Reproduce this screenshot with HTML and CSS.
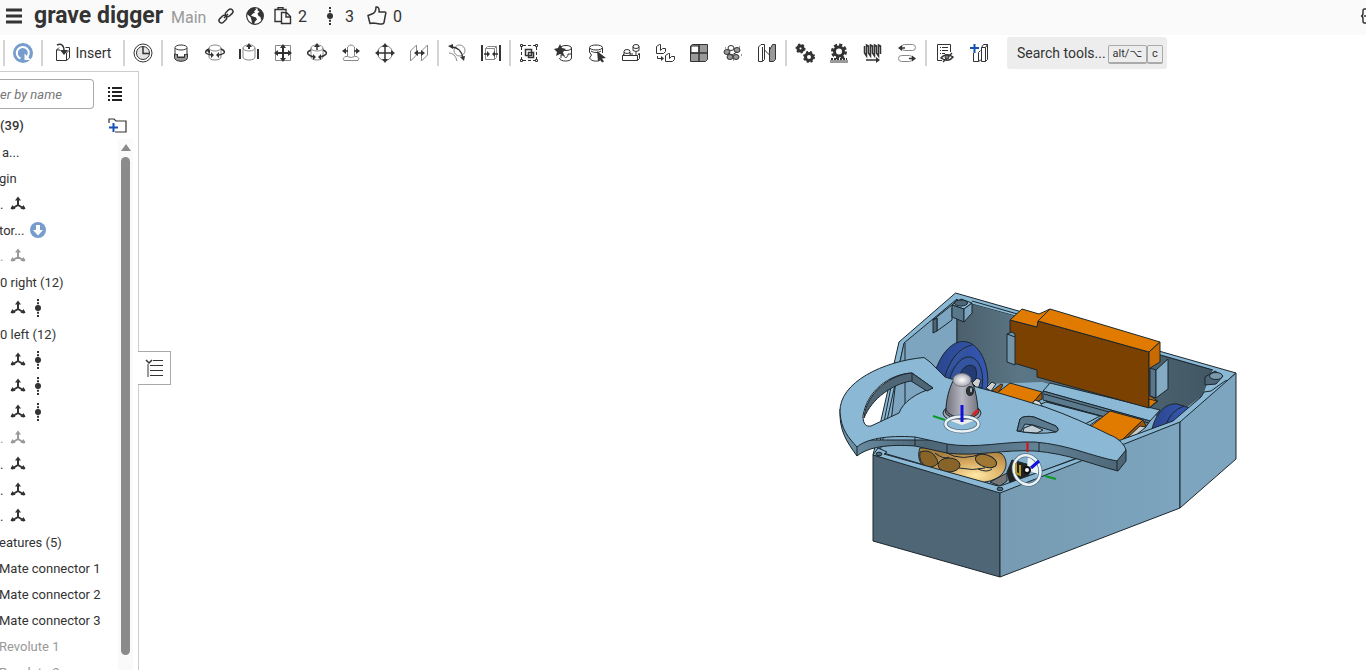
FILE: index.html
```html
<!DOCTYPE html>
<html lang="en">
<head>
<meta charset="utf-8">
<title>grave digger</title>
<link rel="stylesheet" href="styles.css">
</head>
<body>
<svg class="defs" aria-hidden="true">
  <symbol id="cyl" viewBox="0 0 20 20"><ellipse cx="10" cy="5" rx="6" ry="3"/><path d="M4 5v9c0 4 12 4 12 0V5"/></symbol>
  <symbol id="triad" viewBox="0 0 16 16"><path d="M8 9V4M8 9L3 12M8 9l5 3" fill="none" stroke="currentColor" stroke-width="2"/><path d="M8 .5l3 4H5zM.5 13l2-4 3 4zM15.500 13l-2-4-3 4z" fill="currentColor"/><circle cx="2.500" cy="12" r="1.500" fill="currentColor"/><circle cx="13.500" cy="12" r="1.500" fill="currentColor"/></symbol>
  <symbol id="dof" viewBox="0 0 16 18"><path d="M8 0v18" stroke="currentColor" stroke-width="2" stroke-dasharray="2 1.200"/><circle cx="8" cy="9" r="3" fill="currentColor"/></symbol>
</svg>

<header class="header">
  <button class="plain menu" aria-label="Menu"><svg width="16" height="16"><path d="M0 2h16M0 8h16M0 14h16" stroke="#333" stroke-width="3"/></svg></button>
  <h1 class="title">grave digger</h1>
  <span class="branch">Main</span>
  <button class="plain link" aria-label="Share link"><svg width="16" height="16" fill="none" stroke="#333" stroke-width="1.500"><rect x="7" y="2.500" width="8.500" height="5" rx="2.500" transform="rotate(-45 11 5)"/><rect x=".5" y="8.500" width="8.500" height="5" rx="2.500" transform="rotate(-45 5 11)"/><path d="M6 10l4-4"/></svg></button>
  <button class="plain globe" aria-label="Public"><svg width="20" height="20"><circle cx="10" cy="10" r="8.300" fill="#fff" stroke="#333" stroke-width="1.200"/><path d="M3 5l3-3 4-.5 1 2-2 2 1 1-2 1-2 2 2 1 3 1 1 2-2 2-1 3-2-1-.5-3.500L5.500 11 2 8zM13 2.500l3 1.500 2.500 4-.5 5-2 1-.5-3-2-1-1-2.500 2-2-2-1z" fill="#333"/></svg></button>
  <button class="plain stat copies"><svg width="18" height="18" fill="none" stroke="#333" stroke-width="1.400"><path d="M7 14.500H1v-12h11v2M4 2.500v-2h5v2M7.500 5.500h5l4 4v7h-9zM12 5.500v4.500h4.500"/></svg><span>2</span></button>
  <button class="plain stat mates"><svg width="16" height="18"><use href="#dof"/></svg><span>3</span></button>
  <button class="plain stat likes"><svg width="20" height="20" fill="none" stroke="#333" stroke-width="1.500" stroke-linejoin="round"><path d="M1 9.500l4-1.500c3-1 4-3 4-7 2-.5 3.500 1 3 5h6c1 0 1 1.500.5 2.500l-1.500 8c-.3 1.500-1 1.500-2 1.500-4 0-6-1-9-1l-3 .5z"/></svg><span>0</span></button>
  <button class="plain edge" aria-label="Developer"><svg width="6" height="18" fill="none" stroke="#333" stroke-width="1.500"><path d="M6 2H4q-1 0-1 2v2q0 3-2 3 2 0 2 3v2q0 2 1 2h2M4 9h2"/></svg></button>
</header>

<nav class="toolbar" aria-label="Tools">
  <i class="sep"></i>
  <button class="tool" aria-label="Update"><svg width="20" height="20"><circle cx="10" cy="10" r="10" fill="#769dcd"/><path d="M7.500 15.500A6 6 0 1 1 13 15" fill="none" stroke="#fff" stroke-width="2"/><path d="M11.500 10.500v6.500H18z" fill="#fff"/></svg></button>
  <i class="sep"></i>
  <button class="tool insert"><svg class="ic" width="16" height="20"><path d="M4 4.500L1.500 7v10.500h10L14.500 15V4.500h-4M1.500 7H5M11.500 17.500V10l3-3"/><path class="b" d="M2 2c4-2 7 0 7 6"/><path class="k" d="M5 7h8l-4 5z"/></svg><span>Insert</span></button>
  <i class="sep"></i>
  <button class="tool" aria-label="Rollback"><svg class="ic" width="20" height="20"><circle cx="10" cy="10" r="9"/><circle cx="10" cy="10" r="6.500" fill="#e5e5e5"/><path class="b" d="M10 4v6.500h6"/></svg></button>
  <i class="sep"></i>
  <button class="tool" aria-label="Fastened mate"><svg class="ic" width="20" height="20"><path d="M3.500 11v3.500c0 5 13 5 13 0V11l-3 1v2h-7v-2z" fill="#999"/><ellipse class="w" cx="10" cy="4.500" rx="6" ry="2.500"/><path d="M4 5v6M16 5v6M6.500 11v3.500h7V11"/></svg></button>
  <button class="tool" aria-label="Revolute mate"><svg class="ic" width="20" height="20"><use class="g" href="#cyl"/><path class="b" d="M4 6C-1 8-1 11 7 12M16 6c5 2 5 5-3 6"/><path class="k" d="M6 9v6l3-3zM14 9v6l-3-3zM1 7h4v4z"/></svg></button>
  <button class="tool" aria-label="Slider mate"><svg class="ic" width="20" height="20"><use class="g" href="#cyl"/><path class="t" d="M1 6v10M19 6v10M10 6V2"/><path class="k" d="M7 4h6l-3-4z"/></svg></button>
  <button class="tool" aria-label="Planar mate"><svg class="ic" width="20" height="20"><path class="g" d="M2.500 2.500h15v15h-15z"/><path class="t" d="M10 4v12M4 10h12"/><path class="k" d="M7 5h6l-3-4zM7 15h6l-3 4zM5 7v6l-4-3zM15 7v6l4-3z"/></svg></button>
  <button class="tool" aria-label="Cylindrical mate"><svg class="ic" width="20" height="20"><use class="g" href="#cyl"/><path class="b" d="M4 7c-5 2-5 5 3 7M16 7c5 2 5 5-3 7M10 7V3"/><path class="k" d="M7 4h6l-3-4zM6 11v6l3-3zM14 11v6l-3-3z"/></svg></button>
  <button class="tool" aria-label="Pin slot mate"><svg class="ic" width="20" height="20"><path class="g" d="M6.500 4q3.500-4 7 0v9.500q-3 2-7 0zM6 13.500H4q-3 2-1 4h14q2-2-1-4h-2"/><path class="b" d="M3 8h4M13 8h4"/><path class="k" d="M5 5v6L1 8zM15 5v6l4-3z"/></svg></button>
  <button class="tool" aria-label="Ball mate"><svg class="ic" width="20" height="20"><circle class="g" cx="10" cy="10" r="7.500"/><path class="b" d="M10 3v14M3 10h14"/><path class="k" d="M7 4h6l-3-4zM7 16h6l-3 4zM4 7v6l-4-3zM16 7v6l4-3z"/></svg></button>
  <button class="tool" aria-label="Parallel mate"><svg class="ic" width="20" height="20"><path class="g" d="M1.500 8L7.500 2v10l-6 6zM12.500 8l6-6v10l-6 6z"/><path class="b" d="M7 10h7"/><path class="k" d="M9 7v6l-4-3zM12 7v6l4-3z"/></svg></button>
  <i class="sep"></i>
  <button class="tool" aria-label="Tangent mate"><svg class="ic" width="20" height="20"><circle class="g" cx="12.500" cy="7.500" r="5.500"/><path class="g" d="M2 10q6 0 8 8"/><path class="b" d="M4 4c7 0 11 5 12 11"/><path class="k" d="M1 3l5-2v5zM13 14l5-1-1 5z"/></svg></button>
  <button class="tool" aria-label="Width mate"><svg class="ic" width="22" height="20"><path class="g" d="M5.500 5.500h9v11h-9zM5.500 5.500l2-2h9v11l-2 2M14.500 5.500l2-2"/><path class="t" d="M2 2v16M20 2v16"/><path class="b" d="M4 11h5M13 11h5"/><path class="k" d="M7 8v6l3-3zM15 8v6l-3-3z"/></svg></button>
  <i class="sep"></i>
  <button class="tool" aria-label="Group"><svg class="ic" width="20" height="20"><path d="M4 2.500h12M4 17.500h12M2.500 4v12M17.500 4v12" stroke-dasharray="3 2"/><path class="b" d="M6.500 6.500h6v6h-6zM9.500 9.500h5v5h-5z"/><path class="w" d="M1.500 1.500h2v2h-2zM16.500 1.500h2v2h-2zM1.500 16.500h2v2h-2zM16.500 16.500h2v2h-2z"/></svg></button>
  <button class="tool" aria-label="Mate connector"><svg class="ic" width="20" height="20"><ellipse cx="13" cy="5" rx="5.500" ry="2.500"/><path d="M18.500 5v10c0 4-12 4-12 0M8 15v-3h3c0 4 4 3 4-1h3"/><path class="k" d="M7 1l2 4 4 1-3 3 1 4-4-2-4 2 1-4-3-3 4-1z"/></svg></button>
  <button class="tool" aria-label="Select"><svg class="ic" width="20" height="20"><ellipse cx="9" cy="4.500" rx="6.500" ry="2.500"/><path d="M2.500 5v4l2 3-2 3c2 4 10 4 12 1M15.500 5v5M4 8c3 2 7 2 10 0"/><path class="k" d="M10 8l9 7-4 .5 2 3-2 1-2-3-2 2z"/></svg></button>
  <button class="tool" aria-label="Replicate"><svg class="ic" width="20" height="20"><ellipse cx="15" cy="3.500" rx="3" ry="2"/><path d="M12 3.500v4q3 2 6 0v-4M3 9v4M9 9v4M15 9v4"/><ellipse cx="6" cy="8.500" rx="3" ry="2"/><path d="M1.500 12.500h15v5h-15zM1.500 12.500L3 11M16.500 12.500l2-2v5l-2 2M9 11h3M17 11h1"/></svg></button>
  <button class="tool" aria-label="Linear pattern"><svg class="ic" width="20" height="20"><path class="w" d="M1.500 3.500l3-2h1v6l2-2h3v3l-2 2h-7zM10.500 12.500l3-2h1v5l2-2h3v3l-2 2h-7z"/><path d="M2.500 13v2.500H6"/><path class="k" d="M6 13v5l3-2.500z"/></svg></button>
  <button class="tool" aria-label="Pattern"><svg class="ic" width="20" height="20"><path d="M1.500 3l2-1.500h15v15l-2 2h-15z" fill="#999"/><path class="w" d="M2 3h8v7H2z"/><path class="b" d="M10 2v16M2 10h16"/></svg></button>
  <button class="tool" aria-label="Circular pattern"><svg class="ic" width="20" height="20"><g fill="#999"><ellipse cx="4" cy="9" rx="3" ry="2.500"/><ellipse cx="14" cy="7" rx="3" ry="2.500"/><ellipse cx="7" cy="14" rx="3" ry="2.500"/><ellipse cx="13" cy="14" rx="3" ry="2.500"/></g><ellipse class="w" cx="8" cy="5" rx="3" ry="2.500"/><path d="M5 10l4 2 5-3M2 5h1M18 12h1M10 17h1M16 4h1"/></svg></button>
  <button class="tool" aria-label="Mirror"><svg class="ic" width="20" height="20"><path class="w" d="M1.500 4L4 1.500h3.500v15l-2 2h-4zM5.500 4v14"/><path d="M12.500 7l3-5.500h3v15l-2 2h-4z" fill="#999"/><path d="M7.500 2v5l5 5V4"/></svg></button>
  <i class="sep"></i>
  <button class="tool" aria-label="Gear relation"><svg class="gear" width="20" height="20"><circle cx="5.500" cy="5.500" r="2.500"/><circle class="teeth" cx="5.500" cy="5.500" r="4"/><circle cx="14" cy="14" r="3.500"/><circle class="teeth" cx="14" cy="14" r="5"/></svg></button>
  <button class="tool" aria-label="Rack and pinion"><svg class="gear" width="20" height="20"><circle cx="10" cy="8.500" r="4.500"/><circle class="teeth big" cx="10" cy="8.500" r="6.500"/><path d="M2 16h16" stroke-dasharray="2 1" stroke-width="2"/><path d="M1 18.500h18" stroke="#999"/></svg></button>
  <button class="tool" aria-label="Screw relation"><svg class="ic" width="20" height="20"><path class="b" d="M1.500 3v7l2 3V2l2 1v7l2 3V2l2 1v7l2 3V2l2 1v7l2 3V2l2 1v8M3 17h11"/><path class="k" d="M13 14v6l4-3z"/></svg></button>
  <button class="tool" aria-label="Linear relation"><svg class="ic" width="20" height="20"><rect class="g" x="4.500" y="1.500" width="14" height="6" rx="3"/><rect class="g" x="1.500" y="12.500" width="14" height="6" rx="3"/><path class="b" d="M3 5h5M12 15.500h5"/><path class="k" d="M5 2v6L1 5zM15 12.500v6l4-3z"/></svg></button>
  <i class="sep"></i>
  <button class="tool" aria-label="Bill of materials"><svg class="ic" width="20" height="20"><path d="M7 17.500H2.500v-16h13V9M5 4.500h1M7 4.500h6M5 7.500h1M7 7.500h6M5 10.500h1M7 10.500h3"/><path d="M6 15q5-6 12-1-5 6-12 1zM8 19l9-9" stroke-width="1.500"/><circle cx="12" cy="14" r="2" fill="#777"/></svg></button>
  <button class="tool" aria-label="Create part"><svg class="ic" width="20" height="20"><path d="M4.500 10v8.500h5V9.500l2-2M9.500 18.500l3-2M12.500 18.500V4.500l2-3h4v15l-2 2zM12.500 4.500h4v14M16.500 4.500l2-3"/><path d="M1 5h9M5.500 1v9" stroke="#1651b0" stroke-width="2"/></svg></button>
  <button class="search"><span>Search tools...</span><kbd>alt/⌥</kbd><kbd>c</kbd></button>
</nav>

<main class="main">
  <aside class="sidebar">
    <div class="filter">
      <input type="text" placeholder="er by name" aria-label="Filter by name">
      <button class="plain" aria-label="List view"><svg width="14" height="14"><path d="M0 1h2M4 1h10M0 5h2M4 5h10M0 9h2M4 9h10M0 13h2M4 13h10" stroke="#222" stroke-width="2"/></svg></button>
    </div>
    <div class="heading"><strong>(39)</strong><button class="plain" aria-label="Add folder"><svg width="19" height="15"><path d="M1 5V1h5l2 2h10v11H7" fill="none" stroke="#333" stroke-width="1.200"/><path d="M1 9.500h9M5.500 5v9" stroke="#1651b0" stroke-width="2"/></svg></button></div>
    <div class="list">
      <ul class="tree">
        <li class="in">a...</li>
        <li class="edgecut">gin</li>
        <li><span class="dot">.</span><svg class="i16"><use href="#triad"/></svg></li>
        <li class="edgecut">tor...<svg class="i16 down" viewBox="0 0 16 16"><circle cx="8" cy="8" r="8" fill="#769dcd"/><path d="M6 3h4v5h3l-5 5.500L3 8h3z" fill="#fff"/></svg></li>
        <li class="off"><span class="dot">.</span><svg class="i16"><use href="#triad"/></svg></li>
        <li>0 right (12)</li>
        <li><span class="dot"></span><svg class="i16"><use href="#triad"/></svg><svg class="i18"><use href="#dof"/></svg></li>
        <li>0 left (12)</li>
        <li><span class="dot"></span><svg class="i16"><use href="#triad"/></svg><svg class="i18"><use href="#dof"/></svg></li>
        <li><span class="dot"></span><svg class="i16"><use href="#triad"/></svg><svg class="i18"><use href="#dof"/></svg></li>
        <li><span class="dot"></span><svg class="i16"><use href="#triad"/></svg><svg class="i18"><use href="#dof"/></svg></li>
        <li class="off"><span class="dot">.</span><svg class="i16"><use href="#triad"/></svg></li>
        <li><span class="dot">.</span><svg class="i16"><use href="#triad"/></svg></li>
        <li><span class="dot">.</span><svg class="i16"><use href="#triad"/></svg></li>
        <li><span class="dot">.</span><svg class="i16"><use href="#triad"/></svg></li>
        <li class="edgecut">eatures (5)</li>
        <li class="edgecut">Mate connector 1</li>
        <li class="edgecut">Mate connector 2</li>
        <li class="edgecut">Mate connector 3</li>
        <li class="off edgecut">Revolute 1</li>
        <li class="off edgecut">Revolute 2</li>
      </ul>
      <div class="scroll"><i class="up"></i><i class="thumb"></i></div>
    </div>
  </aside>
  <section class="canvas">
    <button class="flyout" aria-label="Expand panel"><svg width="20" height="20" fill="none" stroke="#333"><path d="M2 2l3 3 3-3" stroke-width="1.500"/><path d="M9 2.500h10M6 7.500h13M6 12.500h13M6 17.500h13"/><path d="M4 6v13" stroke="#999" stroke-width="2"/></svg></button>
    <svg class="model" width="420" height="310" viewBox="830 280 420 310" role="img" aria-label="Robot assembly">
      <defs>
        <linearGradient id="wall" x1="0" x2="1"><stop offset="0" stop-color="#4b5f6b"/><stop offset=".25" stop-color="#5b7686"/><stop offset="1" stop-color="#425763"/></linearGradient>
        <linearGradient id="side" x1="0" x2="1"><stop offset="0" stop-color="#769bb2"/><stop offset="1" stop-color="#7da5bf"/></linearGradient>
        <linearGradient id="cone" x1="0" x2="1"><stop offset="0" stop-color="#70707a"/><stop offset=".5" stop-color="#b8b8c4"/><stop offset="1" stop-color="#74747f"/></linearGradient>
        <radialGradient id="cap"><stop offset="0" stop-color="#fff"/><stop offset="1" stop-color="#a8a8b5"/></radialGradient>
        <radialGradient id="gold" cx=".65" cy=".8" r=".7"><stop offset="0" stop-color="#ffe9a6"/><stop offset=".5" stop-color="#d9ac62"/><stop offset="1" stop-color="#a97f3e"/></radialGradient>
        <linearGradient id="lip" x1="0" x2="1"><stop offset="0" stop-color="#6f94aa"/><stop offset=".3" stop-color="#4c6575"/><stop offset=".7" stop-color="#628296"/><stop offset="1" stop-color="#4c6575"/></linearGradient>
        <linearGradient id="wheel" x1="0" x2="1"><stop offset="0" stop-color="#2a468c"/><stop offset="1" stop-color="#3558b4"/></linearGradient>
      </defs>
      <g stroke="#1b272e" stroke-width="1" stroke-linejoin="round">
        <path fill="#8bb8d4" d="M955.500 293L1236 373 1180 422 1000 493 873 455 899 342z"/>
        <path fill="#85b0cb" d="M957 300L1212 370 1200 398 1177 420 1122 441 1000 487 880 452 904 344z"/>
        <path fill="#7ea5bf" d="M904 343L957 299V350L930 385 890 430 896 380z"/>
        <path d="M905 343v65M896 362l-18 90" fill="none"/>
        <path fill="url(#wall)" stroke="none" d="M957 300L1212 370 1203 395 1170 420 1042 382 958 385z"/>
        <path d="M957 299v45M972 301L1213 370" fill="none"/>
        <path fill="#7ea5bf" d="M933 320l4-2v13l15-11v-12l5-7-24 19z"/>
        <path fill="#4e6675" d="M933 320l4-2v13l-4 2z"/>
        <path fill="#8bb8d4" d="M952 305l9-6 11 4-8 6z"/>
        <path fill="#58778a" d="M952 305l12 4v13l-12-5z"/><path fill="#7ea5bf" d="M964 309l8-6v10l-8 9z"/>
        <ellipse cx="961" cy="303" rx="6.500" ry="3" fill="#4e6675"/>

        <path fill="url(#wheel)" d="M936 369C943 350 955 339 967 342 981 345 991 369 987 391L944 380z"/>
        <path fill="#35549f" d="M945 376C952 354 963 347 972 345M950 378C956 358 971 350 979 364 983 371 983 380 982 388L950 382z"/>
        <path fill="#243c76" d="M958 380C961 368 968 362 975 367 978 373 976 380 973 386z"/>
        <path fill="#cdced0" d="M972 383l5-5 4 2-3 9zM986 388l6-6 4 2-5 7z"/><path fill="#a95500" d="M992 391l9-7 2 1-5 8z"/>

        <path fill="#8bb8d4" d="M1050 383L1160 410 1150 421 1043 391z"/>
        <path fill="#5b7a8d" d="M1043 391L1150 421 1145 428 1043 400z"/>
        <path fill="none" d="M1044 394L1149 423M1046 401L1112 419"/>
        <path fill="#8bb8d4" d="M1046 402L1100 416 1085 424 1036 406z"/>
        <path fill="#7a4100" d="M1010 320L1037 327 1038 321 1149 352V408L1037 377V370L1010 362z"/>
        <path fill="#e07b00" d="M1010 320l12-11 17 5 11-5L1160 342 1149 352 1038 321l-1 6z"/>
        <path fill="#c76b00" d="M1149 352l11-10v20l-10 6v28l8 5-9 7z"/><path fill="#e07b00" d="M1149 408v-9l8 2z"/>
        <path fill="none" d="M1038 321l12-12"/>
        <path fill="#7295aa" d="M1007 334l5-2 3 2v31l-8-3zM1007 334l8 3"/>
        <path fill="#58778a" d="M1150 368l6 2v28l-6-2z"/><path fill="#83abc3" d="M1156 370l12-11v30l-12 9z"/>
        <path fill="#4e6675" d="M1205 377l10-6 8 5-7 8-11 1z"/><ellipse cx="1216" cy="376" rx="6.500" ry="3.500" fill="#7899ad"/>
        <path fill="url(#wheel)" d="M1152 429C1156 413 1165 403 1177 404L1190 408 1176 422z"/><path fill="none" d="M1166 425q4-14 18-19"/>

        <path fill="#e07b00" d="M1010 383l32 9-11 13-34-12z"/><path fill="#a95500" d="M1042 392v7l-11 6z"/><path fill="#d6dadd" d="M1031 405l4-5 5 2 3 6-5 2z"/>
        <path fill="#b6c8d2" d="M1086 428l14-10 3 1-14 10z"/>
        <path fill="#e07b00" d="M1110 411l33 9-22 21-31-14z"/><path fill="#a95500" d="M1143 420l3 6-19 14-6 1z"/><path fill="#c9c9c9" d="M1127 438l13-12 6 1-10 8z"/>

        <path fill="url(#gold)" d="M920 448C914 464 929 473 945 478 960 483 984 485 995 479 1007 474 1009 461 1002 454L985 446z"/>
        <path fill="none" d="M959 468q14 3 26 0M945 452q17 11 40 0M935 453q9 7 14 4M978 469q9 4 14 0"/>
        <ellipse cx="949" cy="465" rx="11" ry="7" fill="#896428"/><ellipse cx="986" cy="461" rx="11" ry="6" transform="rotate(18 986 461)" fill="#a17734"/>
        <path fill="#896428" d="M920 452q9-3 14 3 4 5 4 8-4 5-11 4-9-5-7-15z"/>
        <path fill="#777" d="M990 482l17-9v8l-7 5z"/><path fill="#222" d="M1007 472l5-12 18 5-2 16-18 3z"/>
        <path fill="#8bb8d4" d="M873 455l5-7 9 4-3 2 114 32 5-1 78-28 34-12 3-4 55-20 28-24 3-5 7-1 14-10 10-2-56 49-179 70z"/>
        <path fill="#4e6675" d="M873 455L1000 493V577L873 541z"/>
        <path fill="url(#side)" d="M1000 493L1180 422V508L1000 577z"/>
        <path fill="#7da5bf" d="M1180 422L1236 373V459L1180 508z"/>
        <ellipse cx="879" cy="454" rx="3" ry="1.800" fill="#4e6675"/><ellipse cx="1000" cy="489" rx="3" ry="1.800" fill="#4e6675"/>

        <path fill="url(#lip)" d="M840 409C839 430 846 441 857 456 868 447 888 444 915 446L947 453C976 457 1005 449 1035 451 1070 454 1090 464 1118 471L1126 461V450L1100 440 857 440z"/>
        <path fill="#8bb8d4" fill-rule="evenodd" d="M924 357.500C884 361 839 382 840 412 841 430 849 438 857 447 866 439 887 435 915 437L947 444C976 449 1005 441 1035 442 1070 445 1090 456 1117 461L1126 450C1124 443 1116 437 1110 435 1090 425 1068 415 1045 407 1022 400 1007 395 980 388L945 377 930 362zM912 373C889 374 867 391 863 416 863 424 866 427 871 426L899 413C903 402 916 393 933 388zM1017 431L1020 419Q1024 415 1034 417L1056 426Q1060 430 1056 432 1037 435 1017 431z"/>
        <path fill="#4e6675" d="M912 373L933 388 927 391 911 381C893 384 872 398 864 418 866 392 892 374 912 373z"/>
        <path fill="#5b7a8d" d="M1020 419Q1024 415 1034 417L1056 426Q1060 430 1056 432L1033 425 1025 424 1021 431h-4z"/>
        <path fill="#c1ced6" d="M1024 428l8-3 11 5-6 3-14-1z"/><path fill="none" d="M857 447v9M915 437v9M947 444v9M1039 443v8M1117 461v10M912 373v8"/>

        <ellipse cx="962" cy="413" rx="19" ry="9" fill="#aaaab4"/><ellipse cx="962" cy="411" rx="17" ry="8" fill="#777780"/>
        <path fill="url(#cone)" d="M953 381C949 389 946 400 946 410 952 420 972 420 978 410 977 397 975 388 971 380z"/>
        <ellipse cx="962" cy="380" rx="9" ry="6.500" fill="url(#cap)" stroke="#777"/><ellipse cx="970" cy="391" rx="3.500" ry="4.500" fill="#333"/><ellipse cx="971" cy="390" rx="1.500" ry="3" fill="#bbb"/>
      </g>
      <g fill="none">
        <path d="M948 420h28l-14 5z" fill="#eee"/>
        <ellipse cx="962" cy="424" rx="16.500" ry="7.500" stroke="#4e7188" stroke-width="4"/><ellipse cx="962" cy="424" rx="16.500" ry="7.500" stroke="#edf2f5" stroke-width="2.500"/>
        <path d="M962 405v17" stroke="#1010dd" stroke-width="3"/><path d="M973 415l5-5" stroke="#d82020" stroke-width="3"/><path d="M933 416l12 4" stroke="#0b9a24" stroke-width="2"/>
        <path d="M1028 455l12 13-2 6-11-4z" fill="#edf2f5"/>
        <ellipse cx="1027" cy="470" rx="13" ry="15" transform="rotate(-25 1027 470)" stroke="#4e7188" stroke-width="4"/><ellipse cx="1027" cy="470" rx="13" ry="15" transform="rotate(-25 1027 470)" stroke="#edf2f5" stroke-width="2.500"/>
        <circle cx="1027" cy="470" r="3" fill="#fff" stroke="#111" stroke-width="2"/><path d="M1016 463v10l4 2v-10" stroke="#b49b28" stroke-width="2"/>
        <path d="M1031 468l8-7" stroke="#1010dd" stroke-width="3"/><path d="M1027.500 442v10" stroke="#d81010" stroke-width="2"/><path d="M1045 476l11 3" stroke="#0b9a24" stroke-width="2"/>
      </g>
    </svg>
  </section>
</main>
</body>
</html>
```
FILE: styles.css
```css
* { box-sizing: border-box; }
body {
  margin: 0;
  height: 100vh;
  display: flex;
  flex-direction: column;
  overflow: hidden;
  background: #fff;
  color: #333;
  font-family: Roboto, "Liberation Sans", sans-serif;
  font-size: 14px;
}
button { font: inherit; color: inherit; border: 0; background: none; padding: 0; display: flex; align-items: center; flex: none; }
.defs { display: none; }

.header { display: flex; align-items: center; height: 35px; flex: none; padding-left: 6px; padding-bottom: 3px; background: #fafafa; }
.menu { margin-right: 12px; }
.title { margin: 0; width: 128px; font-size: 23px; line-height: 28px; font-weight: 700; white-space: nowrap; }
.branch { margin: 4px 0 0 9px; width: 34px; color: #999; font-size: 16px; line-height: 20px; }
.link { margin-left: 13px; }
.globe { margin-left: 11px; }
.stat { font-size: 16px; }
.copies { margin-left: 9px; gap: 6px; }
.mates { margin-left: 15px; gap: 7px; }
.likes { margin-left: 13px; gap: 6px; }
.edge { margin-left: auto; }

.toolbar { display: flex; align-items: center; height: 36px; flex: none; padding-left: 2px; overflow: hidden; }
.sep { width: 2px; height: 26px; margin: 0 1px; flex: none; background: #d4d4d4; }
.tool { width: 34px; height: 32px; justify-content: center; }
.insert { width: 78px; gap: 5px; }
.ic { fill: none; stroke: #333; stroke-width: 1; }
.ic .g { stroke: #888; }
.ic .b { stroke-width: 1.500; }
.ic .t { stroke-width: 2; }
.ic .k { fill: #333; stroke: none; }
.ic .w { fill: #fff; }
.gear { fill: none; stroke: #333; stroke-width: 3; }
.gear .teeth { stroke-width: 2; stroke-dasharray: 2 2; }
.gear .big { stroke-width: 3; stroke-dasharray: 3 2; }
.search { height: 32px; margin-left: 11px; padding: 0 10px; width: 160px; border-radius: 3px; background: #ededed; white-space: nowrap; }
.search span { margin-right: 2px; }
kbd { height: 19px; margin-top: 2px; padding: 0 4px; border: 1px solid #aaa; border-bottom-width: 2px; border-radius: 2px; font: 11px/16px Roboto, "DejaVu Sans", sans-serif; }

.main { display: flex; flex: 1; min-height: 0; }
.sidebar { display: flex; flex-direction: column; width: 139px; flex: none; border-top: 1px solid #ccc; border-right: 1px solid #ccc; font-size: 13px; }
.filter { display: flex; align-items: center; height: 44px; flex: none; gap: 14px; }
.filter input { width: 94px; height: 30px; padding: 0; border: 1px solid #aaa; border-left: 0; border-radius: 0 4px 4px 0; font: italic 13px/20px Roboto, sans-serif; }
.filter input::placeholder { color: #777; opacity: 1; }
.heading { display: flex; align-items: center; justify-content: space-between; height: 18px; flex: none; padding-right: 11px; }
.heading strong { font-weight: 500; }
.list { display: flex; justify-content: space-between; flex: 1; min-height: 0; margin-top: 5px; }
.tree { list-style: none; margin: 0; padding: 0; overflow: hidden; flex: 1; }
.tree li { display: flex; align-items: center; height: 26px; white-space: nowrap; }
.tree .in { padding-left: 2px; }
.tree .edgecut { margin-left: -1px; }
.tree .off { color: #999; }
.dot { width: 10px; }
.i16 { width: 16px; height: 16px; }
.i18 { width: 16px; height: 18px; margin-left: 4px; }
.down { margin-left: 6px; }
.scroll { width: 15px; margin-right: 5px; background: #fafafa; display: flex; flex-direction: column; align-items: center; padding: 5px 0 15px; }
.up { border: 5px solid transparent; border-top: 0; border-bottom: 7px solid #8b8b8b; }
.thumb { width: 9px; flex: 1; margin-top: 6px; border-radius: 5px; background: #8b8b8b; }

.canvas { position: relative; flex: 1; min-width: 0; }
.flyout { position: absolute; left: -1px; top: 280px; width: 33px; height: 34px; padding-left: 6px; border: 1px solid #aaa; border-left: 0; background: #fff; }
.model { position: absolute; left: 691px; top: 209px; }
```
